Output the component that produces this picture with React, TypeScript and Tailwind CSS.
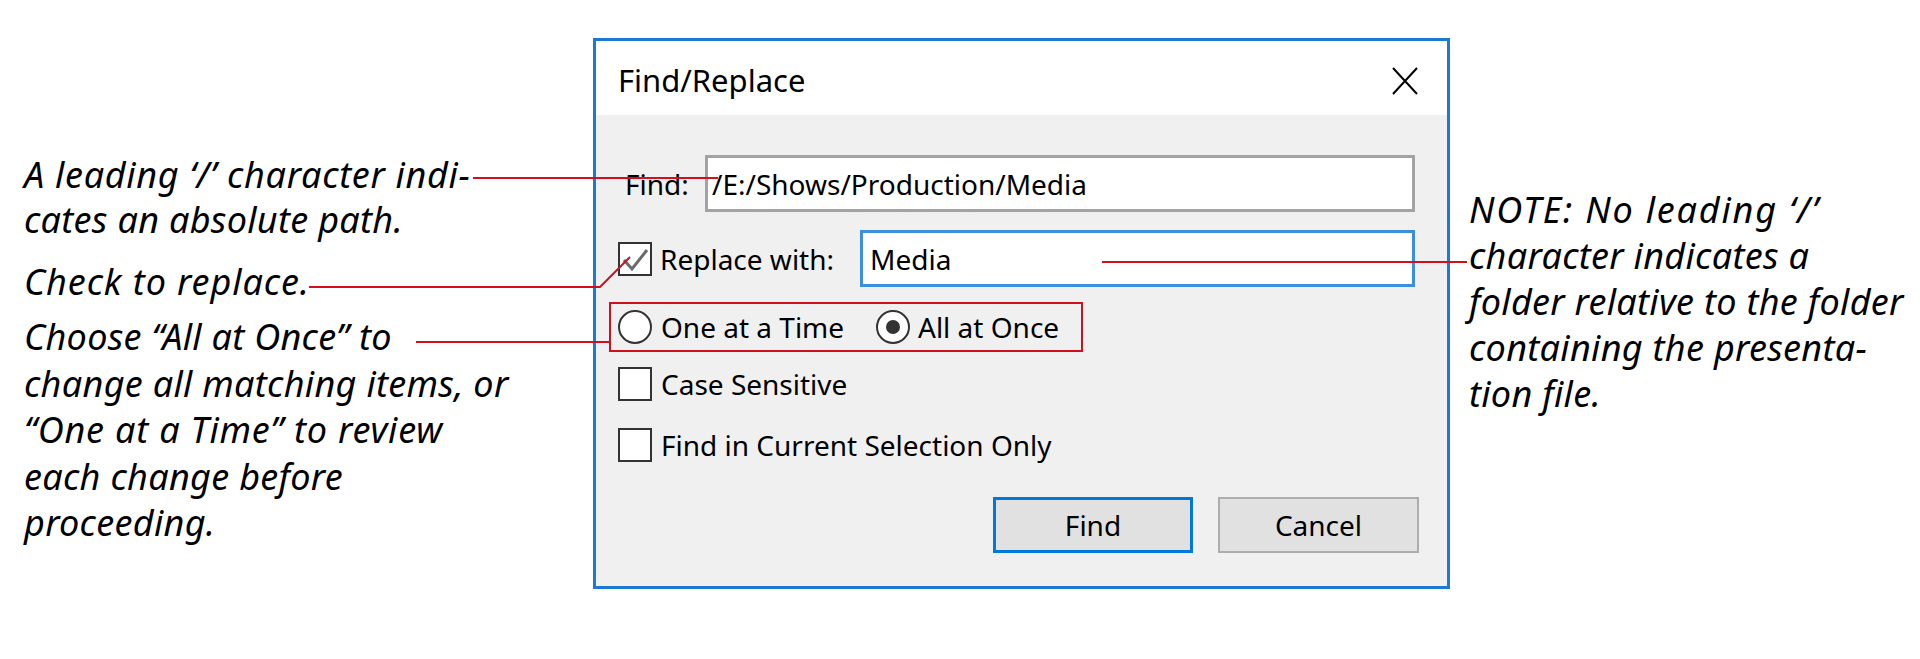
import React from "react";

function Checkbox({ checked = false }: { checked?: boolean }) {
  return (
    <div className="w-[34px] h-[34px] shrink-0 border-2 border-[#333333] bg-white flex items-center justify-center">
      {checked && (
        <svg width="30" height="30" viewBox="0 0 30 30">
          <path d="M4 16 L12 25 L27 6" fill="none" stroke="#6b6b6b" strokeWidth="3" />
        </svg>
      )}
    </div>
  );
}

function Radio({ selected = false }: { selected?: boolean }) {
  return (
    <div className="w-[34px] h-[34px] shrink-0 rounded-full border-2 border-[#333333] bg-white flex items-center justify-center">
      {selected && <div className="w-[14px] h-[14px] rounded-full bg-[#333333]" />}
    </div>
  );
}

function Dialog() {
  return (
    <div className="mt-[38px] w-[857px] h-[551px] shrink-0 border-[3px] border-[#1c7ad4] flex flex-col font-['Noto_Sans',sans-serif] text-[28px] text-black">
      <div className="h-[74px] bg-white flex items-center justify-between pl-[22px] pr-[29px] pt-[5px]">
        <span className="text-[31px]">Find/Replace</span>
        <svg width="26" height="28" viewBox="0 0 26 28">
          <path d="M1 1 L25 27 M25 1 L1 27" stroke="#000" strokeWidth="2" fill="none" />
        </svg>
      </div>
      <div className="flex-1 bg-[#f0f0f0] flex flex-col pt-[40px]">
        <div className="flex items-center h-[57px] pl-[29px] pr-[32px]">
          <span className="w-[80px] shrink-0">Find:</span>
          <div className="flex-1 h-full bg-white border-[3px] border-[#a3a3a3] flex items-center pl-[4px]">
            /E:/Shows/Production/Media
          </div>
        </div>
        <div className="mt-[18px] flex items-center h-[57px] pl-[22px] pr-[32px]">
          <Checkbox checked />
          <span className="ml-[8px] w-[200px] shrink-0">Replace with:</span>
          <div className="flex-1 h-full bg-white border-[3px] border-[#3b8ee0] flex items-center pl-[7px]">
            Media
          </div>
        </div>
        <div className="mt-[15px] ml-[13px] w-[474px] h-[50px] border-2 border-[#d0101e] flex items-center pl-[7px]">
          <Radio />
          <span className="ml-[9px] w-[215px] shrink-0">One at a Time</span>
          <Radio selected />
          <span className="ml-[8px]">All at Once</span>
        </div>
        <div className="mt-[15px] flex items-center h-[34px] pl-[22px]">
          <Checkbox />
          <span className="ml-[9px]">Case Sensitive</span>
        </div>
        <div className="mt-[27px] flex items-center h-[34px] pl-[22px]">
          <Checkbox />
          <span className="ml-[9px]">Find in Current Selection Only</span>
        </div>
        <div className="mt-[35px] flex justify-end gap-[25px] pr-[28px]">
          <div className="w-[200px] h-[56px] bg-[#e1e1e1] border-[3px] border-[#0078d7] flex items-center justify-center">
            Find
          </div>
          <div className="w-[201px] h-[56px] bg-[#e1e1e1] border-2 border-[#adadad] flex items-center justify-center">
            Cancel
          </div>
        </div>
      </div>
    </div>
  );
}

export default function App() {
  return (
    <div className="relative w-[1920px] h-[659px] bg-white flex overflow-hidden">
      <div className="w-[593px] shrink-0 pl-[24px] pt-[152px] flex flex-col text-[36px] tracking-[0.3px] italic text-black font-['Noto_Sans',sans-serif]">
        <p className="leading-[45px]">
          <span className="tracking-[0.7px]">A leading ‘/’ character indi-</span>
          <br />
          cates an absolute path.
        </p>
        <p className="leading-[45px] mt-[17px] tracking-[0.9px]">Check to replace.</p>
        <p className="leading-[46.5px] mt-[10px]">
          Choose “All at Once” to
          <br />
          change all matching items, or
          <br />
          <span className="tracking-[0.8px]">“One at a Time” to review</span>
          <br />
          each change before
          <br />
          proceeding.
        </p>
      </div>
      <Dialog />
      <div className="flex-1 pl-[19px] pt-[187px] text-[36px] tracking-[0.3px] leading-[46px] italic text-black font-['Noto_Sans',sans-serif]">
        <p>
          <span className="tracking-[1.8px]">NOTE: No leading ‘/’</span>
          <br />
          character indicates a
          <br />
          folder relative to the folder
          <br />
          containing the presenta-
          <br />
          tion file.
        </p>
      </div>
      <svg
        className="absolute inset-0 pointer-events-none"
        width="1920"
        height="659"
        viewBox="0 0 1920 659"
      >
        <g stroke="#d0101e" strokeWidth="2" fill="none">
          <path d="M473 178 H718" />
          <path d="M309 287 H600 L630 257" />
          <path d="M416 342 H609" />
          <path d="M1102 262 H1467" />
        </g>
      </svg>
    </div>
  );
}
